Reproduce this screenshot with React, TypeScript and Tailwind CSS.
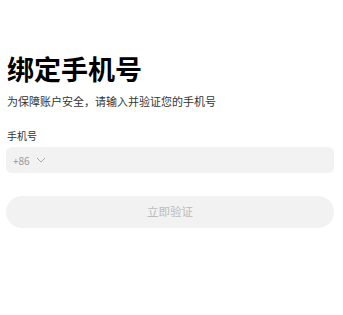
import React, { useState } from 'react'

export default function App() {
  const [phone, setPhone] = useState('')

  return (
    <div
      className="min-h-[315px] w-full bg-white pl-[6px] pr-[9px] pt-[54px]"
      style={{ fontFamily: '"Noto Sans CJK SC", "Noto Sans", sans-serif' }}
    >
      <h1 className="pl-[1px] text-[27px] leading-[30px] font-bold text-black">绑定手机号</h1>
      <p className="mt-[9px] pl-[1px] text-[11px] leading-[16px] text-[#333]">
        为保障账户安全，请输入并验证您的手机号
      </p>

      <label htmlFor="phone" className="mt-[20px] block pl-[1px] text-[10px] leading-[14px] text-[#333]">
        手机号
      </label>
      <div className="mt-[4px] flex h-[26px] items-center rounded-[6px] bg-[#f2f2f2] px-[7px]">
        <button type="button" className="flex items-center gap-[6px] text-[10px] text-[#999]">
          <span>+86</span>
          <svg width="10" height="6" viewBox="0 0 10 6" fill="none">
            <path d="M1 1l4 4 4-4" stroke="#aaa" strokeWidth="1" />
          </svg>
        </button>
        <input
          id="phone"
          value={phone}
          onChange={(e) => setPhone(e.target.value)}
          className="ml-2 h-full flex-1 bg-transparent text-[10px] outline-none"
        />
      </div>

      <button
        type="button"
        disabled
        className="mt-[23px] flex h-[32px] w-full items-center justify-center rounded-full bg-[#f2f2f2] text-[11.5px] text-[#bbb]"
      >
        立即验证
      </button>
    </div>
  )
}
